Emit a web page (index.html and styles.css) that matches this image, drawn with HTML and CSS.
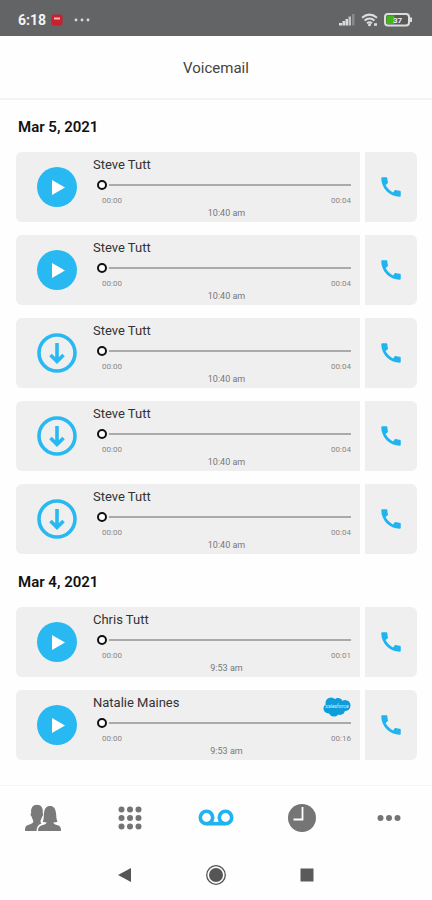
FILE: index.html
```
<!DOCTYPE html>
<html lang="en">
<head>
<meta charset="utf-8">
<meta name="viewport" content="width=device-width, initial-scale=1">
<title>Voicemail</title>
<link rel="stylesheet" href="styles.css">
</head>
<body>
<svg class="sprite" aria-hidden="true">
  <symbol id="play" viewBox="0 0 40 40"><circle cx="20" cy="20" r="20" fill="#29b9f2"/><path d="M15 13v15l13-7.500z" fill="#fff"/></symbol>
  <symbol id="download" viewBox="0 0 40 40" fill="none" stroke="#29b9f2" stroke-width="3.600"><circle cx="20" cy="20" r="18"/><path d="M20 10v18M13.500 22l6.500 6.500 6.500-6.500"/></symbol>
  <symbol id="call" viewBox="0 0 24 24"><path fill="#1fb4ef" d="M20.010 15.380c-1.230 0-2.420-.2-3.530-.56-.35-.12-.74-.03-1.010.24l-1.570 1.970c-2.830-1.350-5.480-3.900-6.890-6.830l1.950-1.660c.27-.28.35-.67.24-1.020-.37-1.110-.56-2.300-.56-3.530 0-.54-.45-.99-.99-.99H4.190C3.650 3 3 3.240 3 3.990 3 13.280 10.730 21 20.010 21c.71 0 .99-.63.99-1.180v-3.450c0-.54-.45-.99-.99-.99z"/></symbol>
</svg>
<div class="screen">
  <div class="status">
    <span class="clock">6:18</span>
    <svg width="12" height="12" viewBox="0 0 12 12"><rect x="0.500" y="0.500" width="11" height="11" rx="2" fill="#c9202f"/><path d="M3 4.500h6" stroke="#f3b5b5" stroke-width="2"/></svg>
    <svg class="more" width="16" height="4" viewBox="0 0 16 4" fill="#ddd"><circle cx="2" cy="2" r="1.400"/><circle cx="8" cy="2" r="1.400"/><circle cx="14" cy="2" r="1.400"/></svg>
    <svg class="signal" width="17" height="12" viewBox="0 0 17 12" fill="#ddd"><rect y="9" width="3" height="2.500"/><rect x="3.500" y="7" width="2.500" height="4.500"/><rect x="6.500" y="5" width="2.500" height="6.500"/><rect x="9.500" y="2.500" width="2.500" height="9" fill="#c4c4c4"/><rect x="13" y="0" width="2.500" height="11.500" fill="#88898b"/></svg>
    <svg width="18" height="14" viewBox="0 0 18 14" fill="none" stroke="#ddd" stroke-width="2"><path d="M1 4.800Q8.500-1.600 16 4.800M3.500 7.600Q8.500 3.400 13.500 7.600M6 10.200Q8.500 8.200 11 10.200"/><circle cx="8.500" cy="11.800" r="1.500" fill="#ddd" stroke="none"/><path d="M13 11.500h3" stroke-width="2.500"/></svg>
    <svg width="28" height="14" viewBox="0 0 28 14"><rect x="1" y="1" width="24" height="11.500" rx="3" fill="#58595b" stroke="#ddd" stroke-width="2"/><rect x="2.500" y="2.500" width="8" height="8.500" rx="1" fill="#43b516"/><path d="M27 4.500v4.500" stroke="#ddd" stroke-width="2"/><text class="level" x="9" y="10">37</text></svg>
  </div>
  <header class="header"><h1>Voicemail</h1></header>
  <main class="content">
    <section>
      <h2>Mar 5, 2021</h2>
      <ul class="list">
        <li class="item">
          <article class="message">
            <button class="action" aria-label="Play"><svg><use href="#play"/></svg></button>
            <div class="details">
              <label class="name" for="seek1">Steve Tutt</label>
              <input class="seek" id="seek1" type="range" value="0">
              <div class="times"><span>00:00</span><span>00:04</span></div>
              <time class="sent">10:40 am</time>
            </div>
          </article>
          <button class="call" aria-label="Call Steve Tutt"><svg><use href="#call"/></svg></button>
        </li>
        <li class="item">
          <article class="message">
            <button class="action" aria-label="Play"><svg><use href="#play"/></svg></button>
            <div class="details">
              <label class="name" for="seek2">Steve Tutt</label>
              <input class="seek" id="seek2" type="range" value="0">
              <div class="times"><span>00:00</span><span>00:04</span></div>
              <time class="sent">10:40 am</time>
            </div>
          </article>
          <button class="call" aria-label="Call Steve Tutt"><svg><use href="#call"/></svg></button>
        </li>
        <li class="item">
          <article class="message">
            <button class="action" aria-label="Download"><svg><use href="#download"/></svg></button>
            <div class="details">
              <label class="name" for="seek3">Steve Tutt</label>
              <input class="seek" id="seek3" type="range" value="0">
              <div class="times"><span>00:00</span><span>00:04</span></div>
              <time class="sent">10:40 am</time>
            </div>
          </article>
          <button class="call" aria-label="Call Steve Tutt"><svg><use href="#call"/></svg></button>
        </li>
        <li class="item">
          <article class="message">
            <button class="action" aria-label="Download"><svg><use href="#download"/></svg></button>
            <div class="details">
              <label class="name" for="seek4">Steve Tutt</label>
              <input class="seek" id="seek4" type="range" value="0">
              <div class="times"><span>00:00</span><span>00:04</span></div>
              <time class="sent">10:40 am</time>
            </div>
          </article>
          <button class="call" aria-label="Call Steve Tutt"><svg><use href="#call"/></svg></button>
        </li>
        <li class="item">
          <article class="message">
            <button class="action" aria-label="Download"><svg><use href="#download"/></svg></button>
            <div class="details">
              <label class="name" for="seek5">Steve Tutt</label>
              <input class="seek" id="seek5" type="range" value="0">
              <div class="times"><span>00:00</span><span>00:04</span></div>
              <time class="sent">10:40 am</time>
            </div>
          </article>
          <button class="call" aria-label="Call Steve Tutt"><svg><use href="#call"/></svg></button>
        </li>
      </ul>
    </section>
    <section>
      <h2>Mar 4, 2021</h2>
      <ul class="list">
        <li class="item">
          <article class="message">
            <button class="action" aria-label="Play"><svg><use href="#play"/></svg></button>
            <div class="details">
              <label class="name" for="seek6">Chris Tutt</label>
              <input class="seek" id="seek6" type="range" value="0">
              <div class="times"><span>00:00</span><span>00:01</span></div>
              <time class="sent">9:53 am</time>
            </div>
          </article>
          <button class="call" aria-label="Call Chris Tutt"><svg><use href="#call"/></svg></button>
        </li>
        <li class="item">
          <article class="message">
            <button class="action" aria-label="Play"><svg><use href="#play"/></svg></button>
            <div class="details">
              <label class="name" for="seek7">Natalie Maines</label>
              <input class="seek" id="seek7" type="range" value="0">
              <div class="times"><span>00:00</span><span>00:16</span></div>
              <time class="sent">9:53 am</time>
            </div>
            <svg class="source" width="28" height="20" viewBox="0 0 28 20"><g fill="#0d9ddb"><circle cx="8" cy="6" r="5.500"/><circle cx="15" cy="5.500" r="4.500"/><circle cx="22" cy="8.500" r="5.500"/><circle cx="5.500" cy="11.500" r="5"/><circle cx="11" cy="14" r="5.500"/><circle cx="17" cy="13" r="5"/></g><text class="source-text" x="14" y="11">salesforce</text></svg>
          </article>
          <button class="call" aria-label="Call Natalie Maines"><svg><use href="#call"/></svg></button>
        </li>
      </ul>
    </section>
  </main>
  <nav class="tabs">
    <a href="#contacts" aria-label="Contacts"><svg width="36" height="28" viewBox="0 0 36 28" fill="#7a7a7a"><path d="M0 27c0-4 .8-5.300 3.200-6.100C6 20 8.300 19.200 8.300 17.400c0-1.400-1.300-2.400-1.700-4.800-1.200-.6-1.300-3-.4-3.600C5.400 4 8 .7 12 .7s6.500 3.300 5.700 8.300c.7.600.6 3-.5 3.600-.5 2.300-1.700 3.300-1.700 4.900 0 .8.300 1.400.9 1.900-3 1.200-4.600 3.100-4.900 7.600z"/><path d="M13 27c.2-3.600 1.300-4.900 4.200-5.800 2.200-.7 4.100-1.200 4.500-2.700-1.600 0-2.800-.2-4-.8 1.300-2.700.9-5.200 1.300-8.700C19.500 4.500 21.500 2 25 2s5.500 2.500 6 7c.4 3.500.2 6 1.500 8.700-1.200.6-2.600.8-4.200.8.400 1.500 2 2 4.200 2.700C35.400 22.100 36 23.400 36 27z"/></svg></a>
    <a href="#keypad" aria-label="Keypad"><svg width="24" height="24" viewBox="0 0 24 24" fill="#747474"><circle cx="3.500" cy="3.500" r="3"/><circle cx="12" cy="3.500" r="3"/><circle cx="20.500" cy="3.500" r="3"/><circle cx="3.500" cy="12" r="3"/><circle cx="12" cy="12" r="3"/><circle cx="20.500" cy="12" r="3"/><circle cx="3.500" cy="20.500" r="3"/><circle cx="12" cy="20.500" r="3"/><circle cx="20.500" cy="20.500" r="3"/></svg></a>
    <a href="#voicemail" aria-label="Voicemail" aria-current="page"><svg width="36" height="18" viewBox="0 0 36 18" fill="none" stroke="#1fb4ef" stroke-width="3.600"><circle cx="8.500" cy="8.500" r="6.200"/><circle cx="27.500" cy="8.500" r="6.200"/><path d="M8.500 14.700h19"/></svg></a>
    <a href="#recents" aria-label="Recents"><svg width="28" height="28" viewBox="0 0 28 28"><circle cx="14" cy="14" r="14" fill="#757575"/><path d="M14.500 3v12.500H5.500" fill="none" stroke="#fff" stroke-width="1.800"/></svg></a>
    <a href="#more" aria-label="More"><svg width="24" height="8" viewBox="0 0 24 8" fill="#747474"><circle cx="3.500" cy="4" r="3"/><circle cx="12" cy="4" r="3"/><circle cx="20.500" cy="4" r="3"/></svg></a>
  </nav>
  <div class="system">
    <button aria-label="Back"><svg width="22" height="22" viewBox="0 0 22 22"><path d="M4 11l13-7v14z" fill="#555"/></svg></button>
    <button aria-label="Home"><svg width="22" height="22" viewBox="0 0 22 22"><circle cx="11" cy="11" r="9.300" fill="none" stroke="#555" stroke-width="1.300"/><circle cx="11" cy="11" r="7" fill="#555"/></svg></button>
    <button aria-label="Overview"><svg width="22" height="22" viewBox="0 0 22 22"><path d="M4.500 4.500h13v13h-13z" fill="#5a5a5a"/></svg></button>
  </div>
</div>
</body>
</html>
```
FILE: styles.css
```
* { box-sizing: border-box; }
body {
  margin: 0;
  background: #fefefe;
  color: #222;
  font-family: Roboto, "Liberation Sans", sans-serif;
}
.sprite { display: none; }
svg { display: block; }
button { border: 0; padding: 0; margin: 0; background: none; }
.screen { display: flex; flex-direction: column; min-height: 100vh; }

.status {
  display: flex;
  align-items: center;
  height: 36px;
  padding: 4px 20px 0 18px;
  gap: 5px;
  background: #636466;
  color: #f4f4f4;
}
.clock { font-size: 14px; font-weight: 700; line-height: 16px; }
.more { margin-left: 6px; }
.signal { margin-left: auto; }
.level { font-size: 8px; font-weight: 700; fill: #eee; }

.header { padding: 22px 0 20px; border-bottom: 2px solid #f3f3f3; }
h1 {
  margin: 0;
  font-size: 15px;
  font-weight: 400;
  line-height: 20px;
  text-align: center;
  color: #444;
}

.content { flex: 1; padding: 0 15px 0 16px; }
section + section { margin-top: 1px; }
h2 {
  margin: 0;
  padding: 17px 2px 15px;
  font-size: 15px;
  font-weight: 600;
  line-height: 20px;
  color: #111;
}
.list { display: grid; gap: 13px; margin: 0; padding: 0; list-style: none; }
.item { display: grid; grid-template-columns: 1fr 52px; gap: 5px; }
.message {
  position: relative;
  display: flex;
  align-items: center;
  gap: 16px;
  padding-left: 21px;
  background: #efefef;
  border-radius: 6px 0 0 6px;
}
.action svg { width: 40px; height: 40px; }
.details { flex: 1; display: flex; flex-direction: column; padding: 5px 0 2px; }
.name { font-size: 13px; line-height: 16px; color: #333; }
.seek {
  -webkit-appearance: none;
  appearance: none;
  height: 16px;
  margin: 4px 9px 2px 4px;
  background: linear-gradient(#aaa, #aaa) center / 100% 2px no-repeat;
}
.seek::-webkit-slider-thumb {
  -webkit-appearance: none;
  width: 10px;
  height: 10px;
  border: 2px solid #111;
  border-radius: 50%;
  background: #fff;
  box-shadow: 0 0 0 2px #efefef;
}
.times {
  display: flex;
  justify-content: space-between;
  padding: 0 9px;
  font-size: 8px;
  line-height: 12px;
  color: #888;
}
.sent { font-size: 9px; line-height: 13px; text-align: center; color: #777; }
.source { position: absolute; top: 7px; right: 9px; }
.source-text { font-size: 5px; fill: #d8f1fc; text-anchor: middle; }
.call {
  display: grid;
  place-items: center;
  background: #efefef;
  border-radius: 0 6px 6px 0;
}
.call svg { width: 26px; height: 26px; }

.tabs {
  display: grid;
  grid-template-columns: repeat(5, 1fr);
  height: 65px;
  border-top: 1px solid #f5f5f5;
}
.tabs a { display: grid; place-items: center; }
.system { display: flex; justify-content: center; gap: 69px; padding: 14px 0; }
```
